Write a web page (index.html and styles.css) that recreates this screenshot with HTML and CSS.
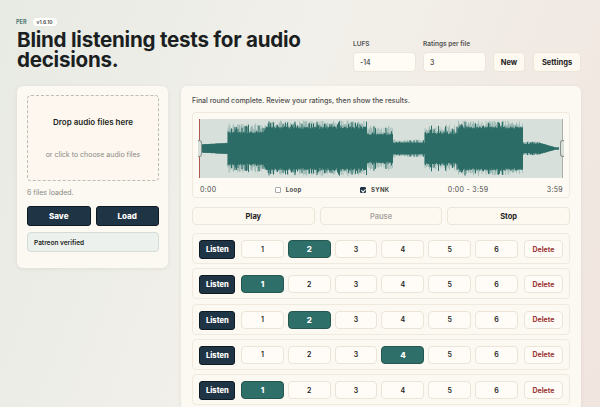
FILE: index.html
```html
<!DOCTYPE html>
<html lang="en">
<head>
  <meta charset="UTF-8" />
  <meta name="viewport" content="width=device-width, initial-scale=1.0" />
  <title>PER - Blind listening tests</title>
  <link rel="stylesheet" href="styles.css">
</head>
<body>
  <div class="page">
    <header class="top">
      <div class="brand">
        <div class="tag"><span class="per">PER</span><span class="ver">v1.6.10</span></div>
        <h1>Blind listening tests for audio decisions.</h1>
      </div>
      <div class="controls">
        <label class="field"><span>LUFS</span><input type="text" value="-14"></label>
        <label class="field"><span>Ratings per file</span><input type="text" value="3"></label>
        <button class="btn new">New</button>
        <button class="btn settings">Settings</button>
      </div>
    </header>

    <main class="layout">
      <aside class="card side">
        <div class="drop">
          <div class="drop-title">Drop audio files here</div>
          <div class="drop-sub">or click to choose audio files</div>
        </div>
        <div class="loaded">6 files loaded.</div>
        <div class="pair">
          <button class="dark">Save</button>
          <button class="dark">Load</button>
        </div>
        <div class="patreon">Patreon verified</div>
      </aside>

      <section class="card session">
        <p class="status">Final round complete. Review your ratings, then show the results.</p>
        <div class="player">
          <div class="wave">
            <svg id="wave" viewBox="0 0 364 59" preserveAspectRatio="none"></svg>
            <span class="handle left"></span>
            <span class="handle right"></span>
          </div>
          <div class="times">
            <span>0:00</span>
            <span class="check"><i class="box"></i>Loop</span>
            <span class="check"><i class="box on"></i>SYNK</span>
            <span>0:00 - 3:59</span>
            <span>3:59</span>
          </div>
        </div>
        <div class="transport">
          <button class="btn">Play</button>
          <button class="btn muted">Pause</button>
          <button class="btn">Stop</button>
        </div>

        <div class="row">
          <button class="dark">Listen</button>
          <button class="num">1</button><button class="num sel">2</button><button class="num">3</button>
          <button class="num">4</button><button class="num">5</button><button class="num">6</button>
          <button class="del">Delete</button>
        </div>
        <div class="row">
          <button class="dark">Listen</button>
          <button class="num sel">1</button><button class="num">2</button><button class="num">3</button>
          <button class="num">4</button><button class="num">5</button><button class="num">6</button>
          <button class="del">Delete</button>
        </div>
        <div class="row">
          <button class="dark">Listen</button>
          <button class="num">1</button><button class="num sel">2</button><button class="num">3</button>
          <button class="num">4</button><button class="num">5</button><button class="num">6</button>
          <button class="del">Delete</button>
        </div>
        <div class="row">
          <button class="dark">Listen</button>
          <button class="num">1</button><button class="num">2</button><button class="num">3</button>
          <button class="num sel">4</button><button class="num">5</button><button class="num">6</button>
          <button class="del">Delete</button>
        </div>
        <div class="row">
          <button class="dark">Listen</button>
          <button class="num sel">1</button><button class="num">2</button><button class="num">3</button>
          <button class="num">4</button><button class="num">5</button><button class="num">6</button>
          <button class="del">Delete</button>
        </div>
      </section>
    </main>
  </div>

  <script src="script.js"></script>
</body>
</html>
```

FILE: styles.css
```css
* {
  box-sizing: border-box;
}
html, body {
  margin: 0;
  height: 100%;
  overflow: hidden;
}
body {
  font-family: Inter, "Noto Sans", sans-serif;
  color: #1b1f22;
  background: linear-gradient(110deg, #e8eae4 0%, #f2f0ea 45%, #f1e5df 100%);
}
button, input {
  font-family: inherit;
}
.page {
  padding: 16px 19px 0 17px;
}

/* header */
.top {
  display: flex;
  justify-content: space-between;
  align-items: flex-end;
}
.tag {
  display: flex;
  align-items: center;
  gap: 6px;
  height: 11px;
  margin-left: -1px;
}
.per {
  font-size: 5.5px;
  font-weight: 700;
  color: #4d7a73;
}
.ver {
  font-size: 5px;
  font-weight: 600;
  background: #fff;
  color: #444;
  border-radius: 6px;
  padding: 1px 4px;
}
h1 {
  margin: 3px 0 0;
  width: 295px;
  font-size: 20.6px;
  line-height: 20px;
  font-weight: 700;
  letter-spacing: -0.25px;
}
.controls {
  display: flex;
  align-items: flex-end;
  gap: 7px;
  margin-bottom: -2px;
}
.field {
  display: flex;
  flex-direction: column;
  gap: 4px;
  font-size: 6.5px;
  font-weight: 600;
  color: #555;
}
.field input {
  width: 63px;
  height: 20px;
  border: 1px solid #ece5da;
  border-radius: 4px;
  background: #fffcf6;
  font-size: 7px;
  padding: 0 6px;
  color: #222;
}
.btn {
  height: 20px;
  padding: 0;
  border: 1px solid #ece5da;
  border-radius: 4px;
  background: #fdf8f0;
  font-size: 7.5px;
  font-weight: 700;
  color: #222;
}
.controls .new {
  width: 32px;
}
.controls .settings {
  width: 48px;
  margin-left: 1px;
}

/* cards */
.layout {
  display: grid;
  grid-template-columns: 151px 400px;
  gap: 13px;
  align-items: start;
  margin-top: 16px;
}
.card {
  background: #fcf9f3;
  border-radius: 6px;
  box-shadow: 0 1px 4px rgba(60, 50, 40, 0.08);
}
.side {
  padding: 9px 9px 16px 10px;
}
.drop {
  height: 86px;
  border: 1px dashed #bdbcb6;
  border-radius: 4px;
  background: #fdf7ef;
  text-align: center;
  padding-top: 21px;
}
.drop-title {
  font-size: 8px;
  font-weight: 600;
}
.drop-sub {
  margin-top: 23px;
  font-size: 7px;
  color: #8a8a86;
}
.loaded {
  margin-top: 7px;
  font-size: 7px;
  color: #8a8a86;
}
.pair {
  display: grid;
  grid-template-columns: 1fr 1fr;
  gap: 5px;
  margin-top: 9px;
}
.dark {
  height: 20px;
  border: 1.5px solid #0f1b24;
  border-radius: 3px;
  background: #1f3444;
  color: #fff;
  font-size: 8px;
  font-weight: 800;
}
.patreon {
  margin-top: 6px;
  height: 20px;
  border: 1px solid #d3dcd7;
  border-radius: 4px;
  background: #edf1ee;
  font-size: 6.5px;
  font-weight: 600;
  padding: 6px 0 0 6px;
}

/* session */
.session {
  padding: 10px 11px 20px;
}
.status {
  margin: 0 0 7px;
  font-size: 7px;
  font-weight: 500;
  color: #4f4f4c;
}
.player {
  border: 1px solid #efe8dc;
  border-radius: 4px;
  padding: 6px 6px 0;
  background: #fdfaf4;
}
.wave {
  position: relative;
  height: 59px;
  background: #d8e0db;
  border-radius: 3px;
}
.wave svg {
  display: block;
  width: 100%;
  height: 100%;
}
.handle {
  position: absolute;
  top: 0;
  bottom: 0;
  width: 6px;
}
.handle.left {
  left: 0;
  border-left: 1px solid #b2574f;
}
.handle.right {
  right: 0;
  border-right: 1px solid #a9aea9;
}
.handle::after {
  content: "";
  position: absolute;
  top: 21px;
  height: 15px;
  width: 3px;
  background: #d8e0db;
  border: 1px solid #8d918c;
}
.handle.left::after {
  left: -2px;
  border-left: none;
  border-radius: 0 3px 3px 0;
}
.handle.right::after {
  right: -2px;
  border-right: none;
  border-radius: 3px 0 0 3px;
}
.times {
  display: flex;
  justify-content: space-between;
  align-items: center;
  height: 15px;
  margin-top: 4px;
  padding: 0 0 0 1px;
  font-size: 7px;
  color: #4a4a48;
  letter-spacing: 0.3px;
}
.check {
  display: flex;
  align-items: center;
  gap: 5px;
  font-size: 6px;
  font-weight: 700;
}
.box {
  display: inline-block;
  width: 6px;
  height: 6px;
  border: 1px solid #aaa;
  border-radius: 1px;
  background: #fff;
}
.box.on {
  background: #1f3444;
  border-color: #1f3444;
  position: relative;
}
.box.on::after {
  content: "";
  position: absolute;
  left: 1px;
  top: 0;
  width: 1.5px;
  height: 3px;
  border: solid #fff;
  border-width: 0 1px 1px 0;
  transform: rotate(45deg);
}
.transport {
  display: grid;
  grid-template-columns: repeat(3, 1fr);
  gap: 5px;
  margin-top: 9px;
}
.transport .btn {
  height: 18px;
  background: #fdf9f1;
}
.transport .muted {
  color: #a7a39c;
  font-weight: 600;
}
.row {
  display: flex;
  gap: 4px;
  margin-top: 8px;
  height: 31px;
  padding: 6px 6px 0;
  border: 1px solid #f0e9de;
  border-radius: 4px;
}
.row + .row {
  margin-top: 4.3px;
}
.row .dark {
  width: 36px;
  height: 19px;
  font-size: 7.5px;
  margin-right: 2px;
}
.num {
  flex: 1;
  height: 18px;
  border: 1px solid #ece4d8;
  border-radius: 4px;
  background: #fffcf7;
  font-size: 7px;
  font-weight: 600;
  color: #222;
}
.num.sel {
  background: #2e6f69;
  border-color: #24574f;
  color: #fff;
  font-weight: 800;
  font-size: 8px;
}
.del {
  width: 39px;
  height: 18px;
  margin-left: 2px;
  border: 1px solid #ece4d8;
  border-radius: 4px;
  background: #fffcf7;
  color: #9c3838;
  font-size: 7px;
  font-weight: 700;
}
```

FILE: script.js
```js
// draw the waveform as thin bars, seeded so it looks the same every load
var svg = document.getElementById('wave');
var seed = 7;
function rand() {
  seed = (seed * 16807) % 2147483647;
  return (seed - 1) / 2147483646;
}

// [start, end, body, peak]
var parts = [
  [0, 29, 5, 6],
  [29, 66, 17, 25],
  [66, 168, 22, 28],
  [168, 194, 15, 23],
  [194, 226, 6, 9],
  [226, 259, 16, 24],
  [259, 324, 22, 28],
  [324, 360, 5, 7]
];

function level(x) {
  for (var i = 0; i < parts.length; i++) {
    if (x >= parts[i][0] && x < parts[i][1]) return parts[i];
  }
  return [0, 0, 0, 0];
}

var mid = 29.5;
var light = '';
var dark = '';
for (var x = 2; x < 360; x += 0.5) {
  var p = level(x);
  var body = p[2];
  var peak = p[3];
  if (x < 29) body = peak = 4 + x * 0.06;
  if (x > 340) body = peak = Math.max(1, 6 * (360 - x) / 20);
  var hi = body + (peak - body) * Math.pow(rand(), 1.4);
  var lo = body * (0.88 + 0.12 * rand());
  if (rand() > 0.8) lo = hi * 0.97;
  light += 'M' + x.toFixed(1) + ' ' + (mid - hi).toFixed(1) + 'V' + (mid + hi * (0.9 + 0.1 * rand())).toFixed(1);
  dark += 'M' + x.toFixed(1) + ' ' + (mid - lo).toFixed(1) + 'V' + (mid + lo).toFixed(1);
}

svg.innerHTML =
  '<path d="' + light + '" stroke="#86aca6" stroke-width="0.6" fill="none"/>' +
  '<path d="' + dark + '" stroke="#2d6d67" stroke-width="1" fill="none"/>';
```
